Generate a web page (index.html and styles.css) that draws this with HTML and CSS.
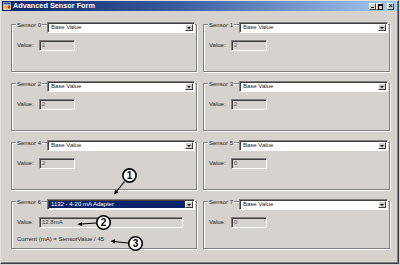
FILE: index.html
```html
<!DOCTYPE html>
<html lang="en">
  <head>
    <meta charset="UTF-8" />
    <title>Advanced Sensor Form</title>
    <link rel="stylesheet" href="styles.css">
  </head>
  <body>
    <div class="window">
      <div class="titlebar">
        <svg class="app-icon" width="8" height="8" viewBox="0 0 8 8">
          <rect x="0" y="0" width="8" height="8" fill="#f4f0e0" stroke="#6a5a3a" stroke-width="0.6" />
          <rect x="0.5" y="0.5" width="7" height="2" fill="#2a4fb0" />
          <rect x="1" y="3.5" width="3" height="3" fill="#e8b020" />
          <rect x="4.5" y="3.5" width="2.5" height="3" fill="#d03020" />
        </svg>
        <span class="title">Advanced Sensor Form</span>
        <div class="caption-buttons">
          <span class="cap-btn min"></span>
          <span class="cap-btn max"></span>
          <span class="cap-btn close">×</span>
        </div>
      </div>

      <div class="client">
        <div class="group">
          <div class="head">
            <div class="legend-cell"><span class="legend">Sensor 0</span></div>
            <div class="combo"><span class="combo-text">Base Value</span><span class="drop"></span></div>
          </div>
          <div class="row"><span class="lbl">Value:</span><div class="box">1</div></div>
        </div>
        <div class="group">
          <div class="head">
            <div class="legend-cell"><span class="legend">Sensor 1</span></div>
            <div class="combo"><span class="combo-text">Base Value</span><span class="drop"></span></div>
          </div>
          <div class="row"><span class="lbl">Value:</span><div class="box">2</div></div>
        </div>

        <div class="group">
          <div class="head">
            <div class="legend-cell"><span class="legend">Sensor 2</span></div>
            <div class="combo"><span class="combo-text">Base Value</span><span class="drop"></span></div>
          </div>
          <div class="row"><span class="lbl">Value:</span><div class="box">2</div></div>
        </div>
        <div class="group">
          <div class="head">
            <div class="legend-cell"><span class="legend">Sensor 3</span></div>
            <div class="combo"><span class="combo-text">Base Value</span><span class="drop"></span></div>
          </div>
          <div class="row"><span class="lbl">Value:</span><div class="box">2</div></div>
        </div>

        <div class="group">
          <div class="head">
            <div class="legend-cell"><span class="legend">Sensor 4</span></div>
            <div class="combo"><span class="combo-text">Base Value</span><span class="drop"></span></div>
          </div>
          <div class="row"><span class="lbl">Value:</span><div class="box">2</div></div>
        </div>
        <div class="group">
          <div class="head">
            <div class="legend-cell"><span class="legend">Sensor 5</span></div>
            <div class="combo"><span class="combo-text">Base Value</span><span class="drop"></span></div>
          </div>
          <div class="row"><span class="lbl">Value:</span><div class="box">0</div></div>
        </div>

        <div class="group">
          <div class="head">
            <div class="legend-cell"><span class="legend">Sensor 6</span></div>
            <div class="combo selected"><span class="combo-text">1132 - 4-20 mA Adapter</span><span class="drop"></span></div>
          </div>
          <div class="row"><span class="lbl">Value:</span><div class="box wide">12.8mA</div></div>
          <div class="formula">Current (mA) = SensorValue / 45</div>
        </div>
        <div class="group">
          <div class="head">
            <div class="legend-cell"><span class="legend">Sensor 7</span></div>
            <div class="combo"><span class="combo-text">Base Value</span><span class="drop"></span></div>
          </div>
          <div class="row"><span class="lbl">Value:</span><div class="box">0</div></div>
        </div>
      </div>

      <!-- numbered callouts drawn over the form -->
      <svg class="callouts" width="400" height="265" viewBox="0 0 400 265">
        <g stroke="#000" stroke-width="1.2" fill="none">
          <line x1="123.5" y1="180.5" x2="115.5" y2="190.5" />
          <line x1="95" y1="222" x2="80" y2="223" />
          <line x1="127" y1="242" x2="113" y2="240.5" />
        </g>
        <g fill="#000">
          <polygon points="113,193.5 117.4,191.4 114.2,188.6" />
          <polygon points="76.5,223.2 81,221 81.2,225.2" />
          <polygon points="109.5,240 114.2,238.2 113.7,242.6" />
        </g>
        <g fill="#fff" stroke="#000" stroke-width="1.6">
          <circle cx="128.5" cy="174.5" r="6.6" />
          <circle cx="102.5" cy="221.5" r="6.8" />
          <circle cx="134.5" cy="242.5" r="6.8" />
        </g>
        <g class="num" text-anchor="middle">
          <text x="128.5" y="178.2">1</text>
          <text x="102.5" y="225.2">2</text>
          <text x="134.5" y="246.2">3</text>
        </g>
      </svg>
    </div>
  </body>
</html>
```

FILE: styles.css
```css
* {
  box-sizing: border-box;
}

html,
body {
  margin: 0;
}

body {
  width: 400px;
  height: 265px;
  overflow: hidden;
  background: #d6d3ce;
  font-family: "Liberation Sans", Arial, sans-serif;
  font-size: 6px;
  color: #1a1a1a;
}

.window {
  position: relative;
  width: 399px;
  height: 264px;
  padding: 0 1px 1px 1px;
  background: #d6d3ce;
  border: 1px solid;
  border-color: #e6e3de #404040 #404040 #e6e3de;
  box-shadow: inset -1px -1px 0 #808080;
}

.titlebar {
  display: flex;
  align-items: center;
  height: 10px;
  background: linear-gradient(to right, #0a246a, #3a5ea0 45%, #a6caf0);
}

.app-icon {
  margin-left: 1px;
  flex: none;
}

.title {
  margin-left: 2px;
  color: #fff;
  font-weight: bold;
  font-size: 7.3px;
  line-height: 10px;
  white-space: nowrap;
}

.caption-buttons {
  display: flex;
  margin-left: auto;
  margin-right: 3px;
}

.cap-btn {
  position: relative;
  width: 7px;
  height: 7px;
  background: #d4d0c8;
  border: 1px solid;
  border-color: #fff #404040 #404040 #fff;
  font-size: 7px;
  line-height: 4px;
  text-align: center;
  font-weight: bold;
  color: #000;
}

.cap-btn.min::after {
  content: "";
  position: absolute;
  left: 1px;
  bottom: 1px;
  width: 3px;
  height: 1px;
  background: #000;
}

.cap-btn.max::after {
  content: "";
  position: absolute;
  left: 1px;
  top: 0;
  width: 3px;
  height: 3px;
  border: 1px solid #000;
  border-top-width: 2px;
}

.cap-btn.close {
  margin-left: 4px;
}

.client {
  display: grid;
  grid-template-columns: 186px 187px;
  column-gap: 6px;
  row-gap: 11px;
  padding: 13px 0 0 9px;
}

.group {
  height: 48px;
  padding: 0 1px 0 4px;
  border: 1px solid #808080;
  box-shadow: inset 1px 1px 0 #fff, 1px 1px 0 #fff;
}

.head {
  display: flex;
  align-items: flex-start;
  height: 11px;
  margin-top: -3px;
}

.legend-cell {
  flex: 0 0 31px;
}

.legend {
  display: inline-block;
  margin-top: -1px;
  padding: 0 1px;
  line-height: 7px;
  background: #d6d3ce;
  white-space: nowrap;
}

.combo {
  display: flex;
  flex: 1;
  height: 11px;
  padding: 1px;
  background: #fff;
  border: 1px solid;
  border-color: #808080 #fff #fff #808080;
  box-shadow: inset 1px 1px 0 #404040;
}

.combo-text {
  flex: 1;
  padding-left: 2px;
  line-height: 7px;
  white-space: nowrap;
  overflow: hidden;
}

.combo.selected .combo-text {
  background: #0a246a;
  color: #fff;
}

.drop {
  position: relative;
  flex: 0 0 8px;
  background: #d4d0c8;
  border: 1px solid;
  border-color: #fff #404040 #404040 #fff;
}

.drop::after {
  content: "";
  position: absolute;
  left: 1px;
  top: 2px;
  border-left: 2px solid transparent;
  border-right: 2px solid transparent;
  border-top: 2px solid #000;
}

.row {
  display: flex;
  align-items: center;
  margin-top: 7px;
}

.lbl {
  flex: 0 0 23px;
  padding-left: 1px;
  line-height: 7px;
}

.box {
  width: 36px;
  height: 11px;
  padding-left: 2px;
  line-height: 9px;
  color: #555;
  background: #d6d3ce;
  border: 1px solid;
  border-color: #808080 #fff #fff #808080;
  box-shadow: inset 1px 1px 0 #404040;
}

.box.wide {
  width: 144px;
  color: #333;
}

.formula {
  margin-top: 8px;
  padding-left: 1px;
  line-height: 7px;
  white-space: nowrap;
}

.callouts {
  position: absolute;
  top: 0;
  left: 0;
  pointer-events: none;
}

.num text {
  font-family: "Liberation Sans", Arial, sans-serif;
  font-weight: bold;
  font-size: 10px;
  fill: #000;
}
```
